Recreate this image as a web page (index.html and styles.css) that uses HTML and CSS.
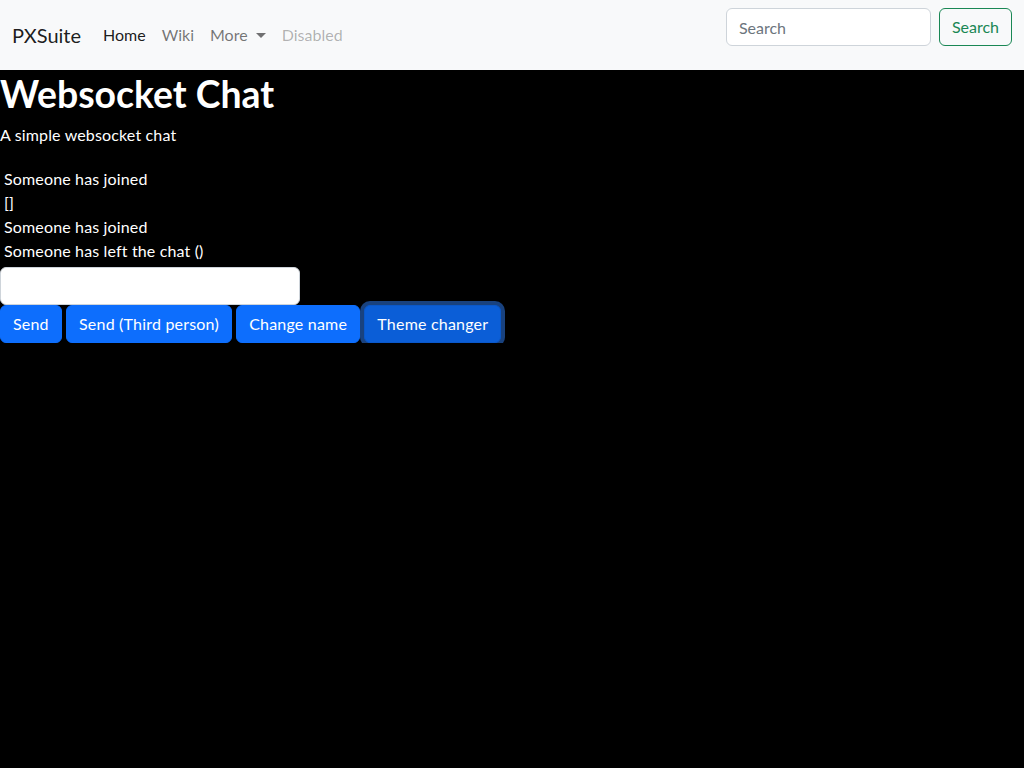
FILE: index.html
```html
<!DOCTYPE html>
<html lang="en">

<head>
    <meta charset="UTF-8">
    <meta name="viewport" content="width=device-width, initial-scale=1.0">
    <title>Websocket Chat</title>
    <link rel="stylesheet" href="styles.css">
</head>

<body>

    <nav class="navbar">
        <div class="nav-left">
            <a class="brand" href="#">PXSuite</a>
            <ul class="nav-links">
                <li><a class="nav-link active" href="#">Home</a></li>
                <li><a class="nav-link" href="#">Wiki</a></li>
                <li><a class="nav-link dropdown" href="#">More <span class="caret"></span></a></li>
                <li><a class="nav-link disabled">Disabled</a></li>
            </ul>
        </div>
        <form class="search-form">
            <input type="search" class="search-input" placeholder="Search">
            <button type="button" class="btn-search">Search</button>
        </form>
    </nav>

    <h1>Websocket Chat</h1>
    <p class="lead-text">A simple websocket chat</p>

    <div class="messages" id="messages">
        <div>Someone has joined</div>
        <div>[]</div>
        <div>Someone has joined</div>
        <div>Someone has left the chat ()</div>
    </div>

    <input type="text" class="chat-input" id="chat-input">
    <div class="actions">
        <button class="btn">Send</button>
        <button class="btn">Send (Third person)</button>
        <button class="btn">Change name</button>
        <button class="btn focused">Theme changer</button>
    </div>

</body>

</html>
```

FILE: styles.css
```css
* {
    box-sizing: border-box;
}

body {
    margin: 0;
    font-family: Lato, 'Liberation Sans', Arial, sans-serif;
    font-size: 16px;
    line-height: 1.5;
    letter-spacing: 0.15px;
    background-color: #000;
    color: #fff;
}

.navbar {
    display: flex;
    justify-content: space-between;
    align-items: center;
    background-color: #f8f9fa;
    padding: 8px 12px;
    height: 70px;
    letter-spacing: 0;
}

.nav-left {
    display: flex;
    align-items: center;
}

.brand {
    font-size: 20px;
    color: rgba(0, 0, 0, 0.9);
    text-decoration: none;
    margin-right: 14px;
    padding: 5px 0;
}

.nav-links {
    display: flex;
    list-style: none;
    margin: 0;
    padding: 0;
}

.nav-link {
    display: block;
    padding: 8px;
    color: rgba(0, 0, 0, 0.55);
    text-decoration: none;
}

.nav-link.active {
    color: rgba(0, 0, 0, 0.9);
}

.nav-link.disabled {
    color: rgba(0, 0, 0, 0.3);
}

.caret {
    display: inline-block;
    margin-left: 4px;
    vertical-align: 3px;
    border-top: 5px solid;
    border-left: 5px solid transparent;
    border-right: 5px solid transparent;
}

.search-form {
    display: flex;
    align-self: flex-start;
}

.search-input {
    width: 205px;
    height: 38px;
    padding: 6px 12px;
    font: inherit;
    color: #212529;
    background-color: #fff;
    border: 1px solid #ced4da;
    border-radius: 6px;
    margin-right: 8px;
}

.search-input::placeholder {
    color: #6c757d;
}

.btn-search {
    height: 38px;
    padding: 6px 12px;
    font: inherit;
    color: #198754;
    background: transparent;
    border: 1px solid #198754;
    border-radius: 6px;
}

h1 {
    margin: 0 0 8px;
    padding-top: 2px;
    font-size: 37.36px;
    font-weight: 700;
    line-height: 1.2;
    letter-spacing: 0;
}

.lead-text {
    margin: -2px 0 16px;
}

.messages {
    padding: 4px;
}

.chat-input {
    display: block;
    width: 300px;
    height: 38px;
    padding: 6px 12px;
    font: inherit;
    border: 1px solid #ced4da;
    border-radius: 6px;
    background-color: #fff;
}

.btn {
    height: 38px;
    padding: 6px 12px;
    font: inherit;
    letter-spacing: 0.2px;
    color: #fff;
    background-color: #0d6efd;
    border: 1px solid #0d6efd;
    border-radius: 6px;
}

.btn.focused {
    background-color: #0b5ed7;
    border-color: #0a58ca;
    box-shadow: 0 0 0 4px rgba(49, 132, 253, 0.5);
}
```
